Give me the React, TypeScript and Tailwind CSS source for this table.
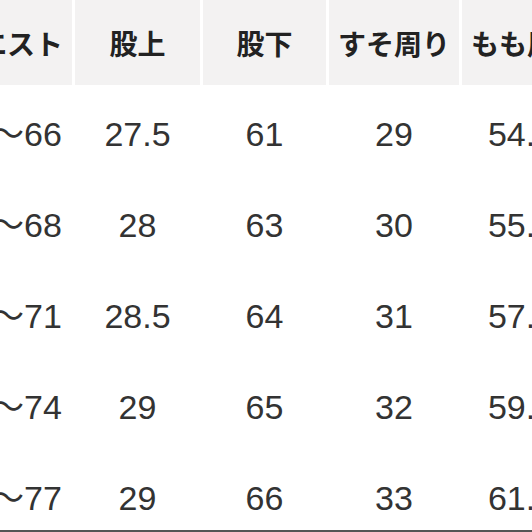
const headers = ["ウエスト", "股上", "股下", "すそ周り", "もも周り"];

const rows = [
  ["64〜66", "27.5", "61", "29", "54.5"],
  ["66〜68", "28", "63", "30", "55.5"],
  ["69〜71", "28.5", "64", "31", "57.5"],
  ["72〜74", "29", "65", "32", "59.5"],
  ["75〜77", "29", "66", "33", "61.5"],
];

const cols = "grid grid-cols-[130px_125px_123px_130px_130px] gap-x-[3px]";

export default function App() {
  return (
    <div className="w-[532px] h-[532px] overflow-hidden bg-white">
      <div className="ml-[-58px] w-[650px] flex flex-col">
        {/* Header */}
        <div className={`${cols} h-[85px] bg-white`}>
          {headers.map((h, i) => (
            <div
              key={i}
              className="flex items-center justify-center bg-[#f3f2f2] text-[28px] font-bold text-[#222] whitespace-nowrap"
              style={{ fontFamily: '"Noto Sans CJK JP", sans-serif' }}
            >
              {h}
            </div>
          ))}
        </div>

        {/* Rows */}
        {rows.map((r, ri) => (
          <div
            key={ri}
            className={`${cols} ${
              ri === rows.length - 1
                ? "h-[83px] pt-[17px] border-b-2 border-[#555]"
                : "h-[91px] pt-[8px]"
            }`}
          >
            {r.map((v, ci) => (
              <div
                key={ci}
                className={`flex items-center justify-center text-[34px] text-[#333] whitespace-nowrap ${
                  ci === 4 ? "pr-[12px]" : ""
                }`}
                style={{ fontFamily: '"Liberation Sans", "Noto Sans CJK JP", sans-serif' }}
              >
                {v}
              </div>
            ))}
          </div>
        ))}
      </div>
    </div>
  );
}
